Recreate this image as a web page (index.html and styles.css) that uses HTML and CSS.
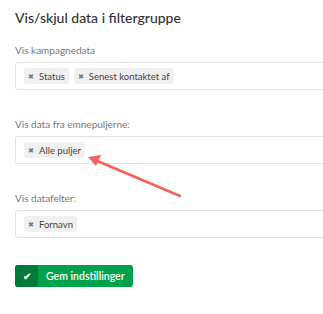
FILE: index.html
```html
<!DOCTYPE html>
<html lang="da">
<head>
  <meta charset="UTF-8" />
  <title>Vis/skjul data i filtergruppe</title>
  <link rel="stylesheet" href="styles.css">
</head>
<body>
  <div class="panel">
    <h3 class="panel-title">Vis/skjul data i filtergruppe</h3>

    <div class="field">
      <label>Vis kampagnedata</label>
      <div class="select-box">
        <span class="tag"><span class="tag-x">&#10006;</span>Status</span>
        <span class="tag"><span class="tag-x">&#10006;</span>Senest kontaktet af</span>
      </div>
    </div>

    <div class="field">
      <label>Vis data fra emnepuljerne:</label>
      <div class="select-box">
        <span class="tag"><span class="tag-x">&#10006;</span>Alle puljer</span>
      </div>
    </div>

    <div class="field">
      <label>Vis datafelter:</label>
      <div class="select-box">
        <span class="tag"><span class="tag-x">&#10006;</span>Fornavn</span>
      </div>
    </div>

    <button class="save-btn" type="button">
      <span class="save-icon">&#10004;</span>
      <span class="save-text">Gem indstillinger</span>
    </button>
  </div>

  <svg class="arrow" width="323" height="314" viewBox="0 0 323 314">
    <line x1="180" y1="196" x2="95" y2="160" stroke="#f0625c" stroke-width="2.5" stroke-linecap="round"/>
    <polygon points="88,157 101,155 96,166" fill="#f0625c"/>
  </svg>
</body>
</html>
```

FILE: styles.css
```css
body {
  margin: 0;
  background: #fff;
  font-family: Lato, sans-serif;
  color: #333;
}
.panel {
  padding: 9px 0 0 15px;
}
.panel-title {
  margin: 0 0 16px;
  font-size: 14px;
  font-weight: 500;
  line-height: 18px;
  color: #333;
}
.field {
  margin-bottom: 27px;
}
.field label {
  display: block;
  font-size: 10px;
  line-height: 14px;
  color: #777;
  margin-bottom: 5px;
}
.select-box {
  display: flex;
  gap: 5px;
  align-items: center;
  height: 26px;
  padding: 0 8px;
  border: 1px solid #e3e3e3;
  border-right: none;
  border-radius: 3px 0 0 3px;
}
.tag {
  display: inline-flex;
  align-items: center;
  height: 16px;
  padding: 0 4px;
  background: #f0f0f0;
  border-radius: 3px;
  font-size: 9.5px;
  color: #444;
}
.tag-x {
  font-size: 7px;
  color: #777;
  margin-right: 5px;
}
.save-btn {
  display: flex;
  align-items: stretch;
  height: 22px;
  padding: 0;
  margin-top: 1px;
  border: none;
  border-radius: 3px;
  overflow: hidden;
  background: #00a14b;
  color: #fff;
  font-family: Lato, sans-serif;
  font-size: 10.5px;
  font-weight: 600;
  cursor: pointer;
}
.save-icon {
  display: flex;
  align-items: center;
  justify-content: center;
  width: 23px;
  background: #007a3b;
  font-size: 10px;
}
.save-text {
  display: flex;
  align-items: center;
  padding: 0 8px;
}
.arrow {
  position: absolute;
  top: 0;
  left: 0;
  pointer-events: none;
}
```
